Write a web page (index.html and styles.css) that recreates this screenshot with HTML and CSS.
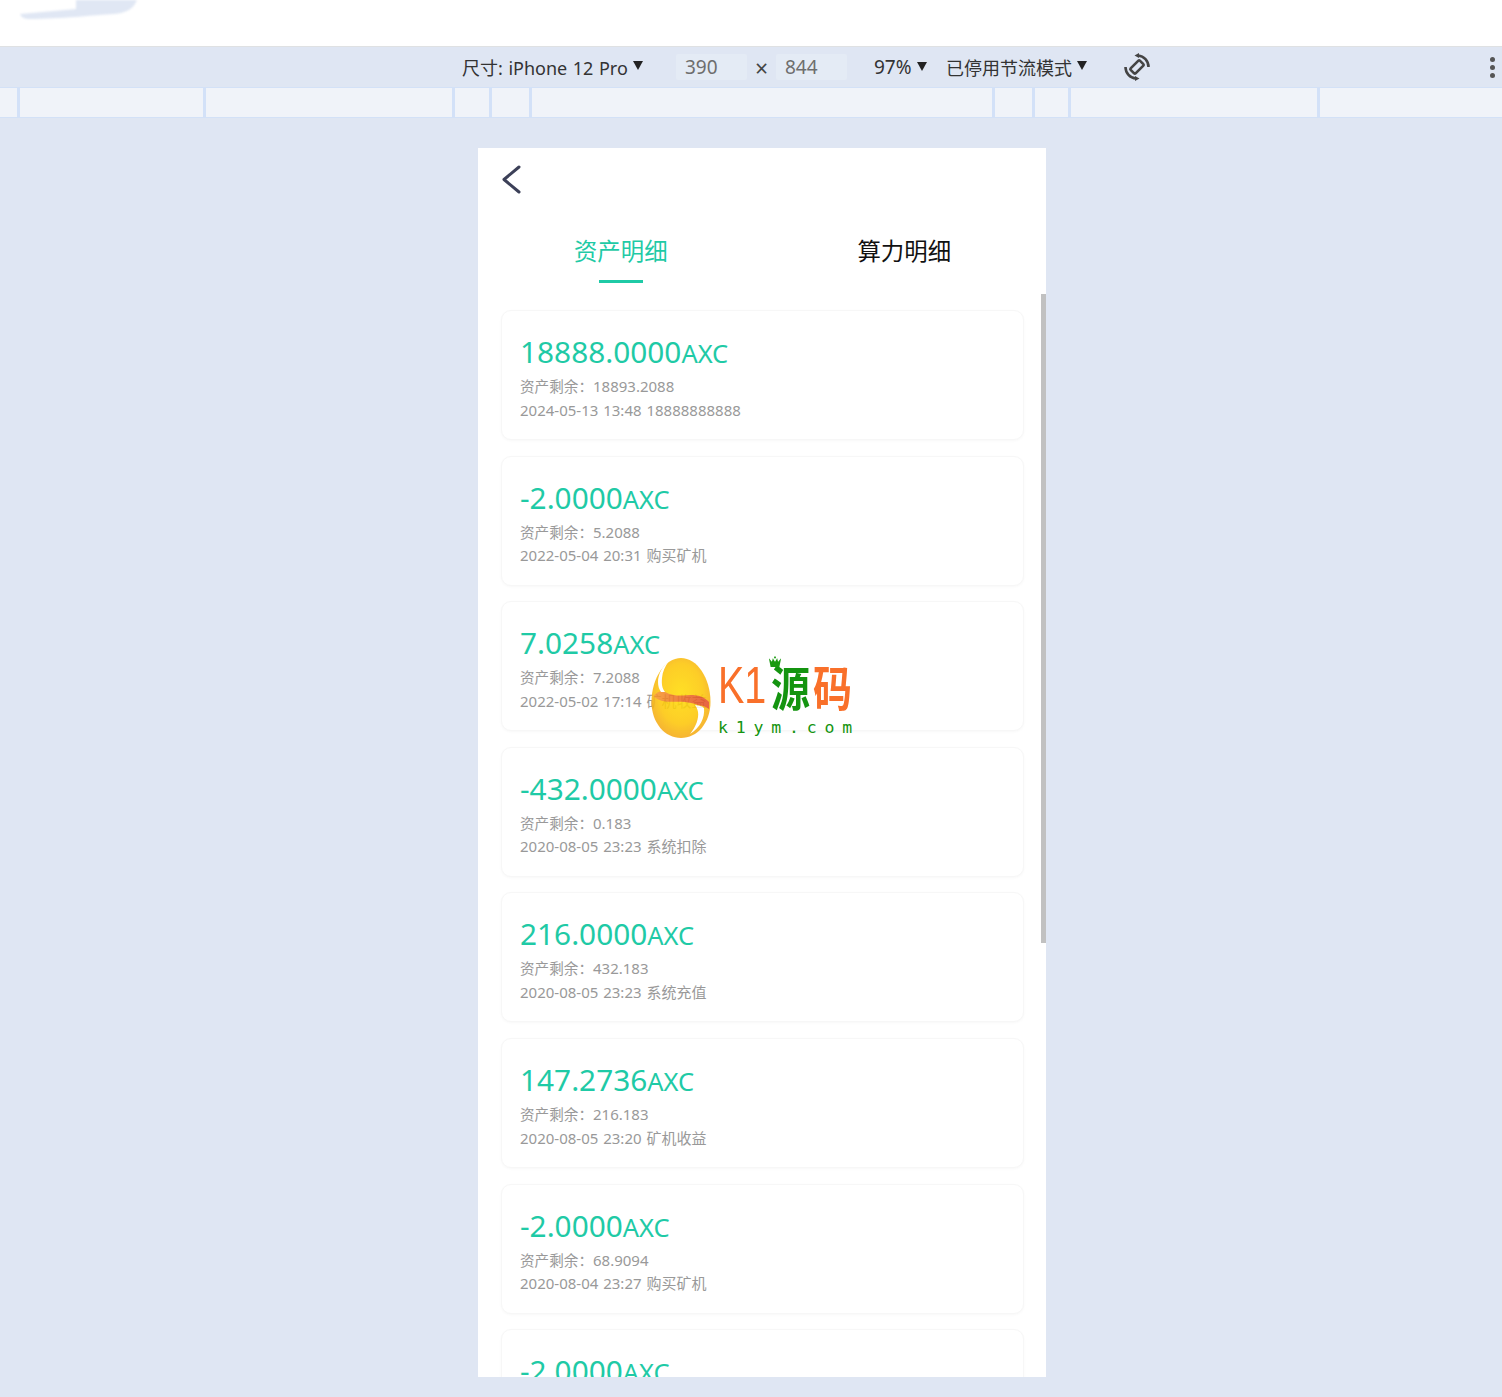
FILE: index.html
```html
<!DOCTYPE html>
<html lang="zh-CN">
<head>
<meta charset="utf-8">
<title>资产明细</title>
<link rel="stylesheet" href="styles.css">
</head>
<body>
<header class="topbar">
  <svg class="blob" width="140" height="20" viewBox="0 0 140 20"><path d="M76 0H137C134 8 127 13 114 14C95 15 60 19 30 19C24 19 21 17 20 14L76 9Z" fill="#e0e7f4"/></svg>
</header>
<div class="toolbar">
  <div class="device"><span>尺寸: iPhone 12 Pro</span><i class="caret"></i></div>
  <div class="dim dim-w">390</div>
  <span class="times">×</span>
  <div class="dim dim-h">844</div>
  <div class="zoom"><span>97%</span><i class="caret"></i></div>
  <div class="throttle"><span>已停用节流模式</span><i class="caret"></i></div>
  <svg class="rotate" width="28" height="28" viewBox="0 0 28 28" fill="none" stroke="#444" stroke-width="2.600">
    <rect x="10.500" y="7.500" width="7" height="13" rx="1" transform="rotate(45 14 14)"/>
    <path d="M15 2.500A11.500 11.500 0 0 1 25.500 14"/><path d="M13 25.500A11.500 11.500 0 0 1 2.500 14"/>
    <path d="M11.500 2.500 16 0V5z" fill="#444" stroke="none"/><path d="M16.500 25.500 12 28V23z" fill="#444" stroke="none"/>
  </svg>
  <div class="dots"><i></i><i></i><i></i></div>
</div>
<div class="ruler"><b></b><b></b><b></b><b></b><b></b><b></b><b></b><b></b><b></b><b></b></div>
<main class="canvas">
  <section class="phone">
    <svg class="back" width="20" height="30" viewBox="0 0 20 30" fill="none" stroke="#3c4058" stroke-width="3" stroke-linecap="round" stroke-linejoin="round"><path d="M17 2 2 14.500 17 27"/></svg>
    <nav class="tabs">
      <div class="tab active">资产明细</div>
      <div class="tab">算力明细</div>
    </nav>
    <div class="list">
      <article class="card"><h2 class="amount">18888.0000<small>AXC</small></h2><p class="line"><span class="label">资产剩余：</span>18893.2088</p><p class="line">2024-05-13 13:48 18888888888</p></article>
      <article class="card"><h2 class="amount">-2.0000<small>AXC</small></h2><p class="line"><span class="label">资产剩余：</span>5.2088</p><p class="line">2022-05-04 20:31 购买矿机</p></article>
      <article class="card"><h2 class="amount">7.0258<small>AXC</small></h2><p class="line"><span class="label">资产剩余：</span>7.2088</p><p class="line">2022-05-02 17:14 矿机收益</p></article>
      <article class="card"><h2 class="amount">-432.0000<small>AXC</small></h2><p class="line"><span class="label">资产剩余：</span>0.183</p><p class="line">2020-08-05 23:23 系统扣除</p></article>
      <article class="card"><h2 class="amount">216.0000<small>AXC</small></h2><p class="line"><span class="label">资产剩余：</span>432.183</p><p class="line">2020-08-05 23:23 系统充值</p></article>
      <article class="card"><h2 class="amount">147.2736<small>AXC</small></h2><p class="line"><span class="label">资产剩余：</span>216.183</p><p class="line">2020-08-05 23:20 矿机收益</p></article>
      <article class="card"><h2 class="amount">-2.0000<small>AXC</small></h2><p class="line"><span class="label">资产剩余：</span>68.9094</p><p class="line">2020-08-04 23:27 购买矿机</p></article>
      <article class="card"><h2 class="amount">-2.0000<small>AXC</small></h2></article>
    </div>
    <div class="scrollbar"></div>
  </section>
  <div class="watermark">
    <svg class="egg" width="60" height="80" viewBox="0 0 60 80">
      <defs>
        <radialGradient id="eggFill" cx="0.5" cy="0.45" r="0.62"><stop offset="0" stop-color="#ffdc08"/><stop offset="0.6" stop-color="#fdc70a"/><stop offset="1" stop-color="#f2a01c"/></radialGradient>
        <linearGradient id="band" x1="0" x2="1" y1="0" y2="0"><stop offset="0" stop-color="#f79a2a"/><stop offset="0.35" stop-color="#f07a28"/><stop offset="1" stop-color="#e4502a"/></linearGradient>
      </defs>
      <path d="M30 0C46 0 59.500 20 59.500 44C59.500 65 46 80 30 80C14 80 0.500 65 0.500 44C0.500 20 14 0 30 0Z" fill="url(#eggFill)"/>
      <path d="M2.500 38C6 34 10 32 14 34C20 37 26 38 32 37.500C42 36 52 37 58 44L58 51C54 48 50 47.500 47 47C42 45 38 44.500 34 44C26 43 20 44.500 14 43.500C9 42.500 5 41 2.500 38Z" fill="url(#band)"/>
      <path d="M18 3C11 8 7 17 7 24C7 28 8 31 10 34L14 34C11 30 10.500 26 11 20C11.500 14 14 8 18 3Z" fill="#fff"/>
      <path d="M44 47C48 47.500 51 48 53 50C54 60 49 70 39 76C45 69 48 60 47 54C46.500 51 45.500 49 44 47Z" fill="#fff"/>
    </svg>
    <div class="brand">
      <div class="brand-name"><span class="orange k1">K1</span><span class="green yuan">源<svg class="crown" width="14" height="15" viewBox="0 0 16 14"><path d="M1 3 4.500 7 5.500 3 8 7 10.500 3 11.500 7 15 3 13 13H3Z M8 0l1.500 3h-3z" fill="#1a9a10"/></svg></span><span class="orange ma">码</span></div>
      <div class="brand-url">k1ym.com</div>
    </div>
  </div>
</main>
</body>
</html>
```
FILE: styles.css
```css
* { box-sizing: border-box; }
html, body { margin: 0; height: 100%; overflow: hidden; }
body {
  width: 1502px;
  height: 1397px;
  background: #dfe6f3;
  font-family: "Noto Sans", "Noto Sans CJK SC", sans-serif;
  display: flex;
  flex-direction: column;
}
.topbar {
  height: 47px;
  flex: none;
  background: #fff;
  border-bottom: 1px solid #dfe1e3;
  overflow: hidden;
}
.blob { display: block; filter: blur(0.8px); }
.toolbar {
  height: 40px;
  flex: none;
  display: flex;
  align-items: center;
  padding-left: 462px;
  font-size: 19px;
  color: #333;
}
.toolbar span { white-space: nowrap; }
.device, .throttle { font-size: 18px; word-spacing: 0.900px; padding-bottom: 1px; }
.caret {
  display: inline-block;
  width: 0;
  height: 0;
  margin-left: 5px;
  border-left: 5.500px solid transparent;
  border-right: 5.500px solid transparent;
  border-top: 9px solid #222;
  position: relative;
  top: -1px;
}
.device, .zoom, .throttle { display: flex; align-items: center; }
.device { width: 183px; }
.dim {
  height: 26px;
  line-height: 26px;
  background: #e4ebf5;
  color: #6e6e6e;
  width: 71px;
  padding-left: 9px;
  border-radius: 2px;
}
.dim-w { margin-left: 31px; }
.times { width: 29px; text-align: center; color: #444; font-size: 23px; line-height: 30px; padding-top: 2px; }
.dim-h { margin-right: 27px; }
.zoom { width: 72px; }
.throttle { width: 177px; }
.rotate { flex: none; overflow: visible; }
.dots {
  margin-left: auto;
  margin-right: 7px;
  display: flex;
  flex-direction: column;
  gap: 3px;
}
.dots i { width: 5px; height: 5px; border-radius: 50%; background: #555; }
.ruler {
  height: 31px;
  flex: none;
  display: grid;
  grid-template-columns: 17px 186px 249px 37px 40px 463px 40px 36px 249px 1fr;
  background: #f0f3f9;
  border-top: 1px solid #d3e1f7;
  border-bottom: 1px solid #d3e1f7;
}
.ruler b { border-left: 3px solid #d3e1f8; }
.ruler b:first-child { border-left: 0; }
.canvas { position: relative; flex: 1; padding: 30px 0 0 478px; }
.phone {
  position: relative;
  width: 568px;
  height: 1229px;
  background: #fff;
  overflow: hidden;
}
.back { display: block; position: absolute; left: 24px; top: 17px; }
.tabs {
  display: grid;
  grid-template-columns: 1fr 1fr;
  padding: 72px 0 0 1px;
  height: 146px;
}
.tab {
  position: relative;
  justify-self: center;
  font-size: 23.400px;
  line-height: 62px;
  height: 62px;
  color: #111;
}
.tab.active { color: #1fcaa6; }
.tab.active::after {
  content: "";
  position: absolute;
  left: 25px;
  right: 25px;
  bottom: -1px;
  height: 3px;
  background: #1fcaa6;
}
.list {
  padding: 16px 22px 0 23px;
  display: flex;
  flex-direction: column;
  gap: 15.600px;
}
.card {
  height: 130px;
  flex: none;
  padding: 19px 18px 0;
  background: #fff;
  border: 1px solid #f7f7f7;
  border-radius: 10px;
  box-shadow: 0 1px 3px rgba(0, 0, 0, 0.03);
}
.amount {
  margin: 0;
  font-size: 29.800px;
  font-weight: 400;
  line-height: 43px;
  color: #1fcaa6;
  white-space: nowrap;
}
.amount small { font-size: 25.500px; }
.line {
  margin: 0;
  font-size: 15px;
  line-height: 23.700px;
  word-spacing: 1px;
  color: #999;
  white-space: nowrap;
}
.label { font-size: 14.600px; }
.scrollbar {
  position: absolute;
  right: 0;
  top: 146px;
  width: 5px;
  height: 649px;
  background: #c1c1c1;
}
.watermark {
  position: absolute;
  left: 651px;
  top: 540px;
  display: flex;
  gap: 7px;
}
.egg { display: block; flex: none; opacity: 0.88; }
.brand { display: flex; flex-direction: column; }
.brand-name {
  display: flex;
  align-items: center;
  height: 60px;
  white-space: nowrap;
}
.orange { color: #f9702a; }
.green { color: #149410; }
.k1 {
  width: 53px;
  margin-bottom: 6px;
  font-family: "Liberation Sans", sans-serif;
  font-size: 52px;
  line-height: 60px;
  transform: scaleX(0.76);
  transform-origin: left center;
}
.yuan, .ma {
  position: relative;
  font-size: 39px;
  font-weight: 700;
  line-height: 60px;
  transform: scaleY(1.22);
}
.ma { margin-left: 3px; }
.crown { position: absolute; left: -3px; top: 1px; transform: scaleY(0.82); }
.brand-url {
  font-family: "DejaVu Sans Mono", monospace;
  font-size: 16.500px;
  line-height: 20px;
  letter-spacing: 7.800px;
  color: #149410;
  white-space: nowrap;
}
```
